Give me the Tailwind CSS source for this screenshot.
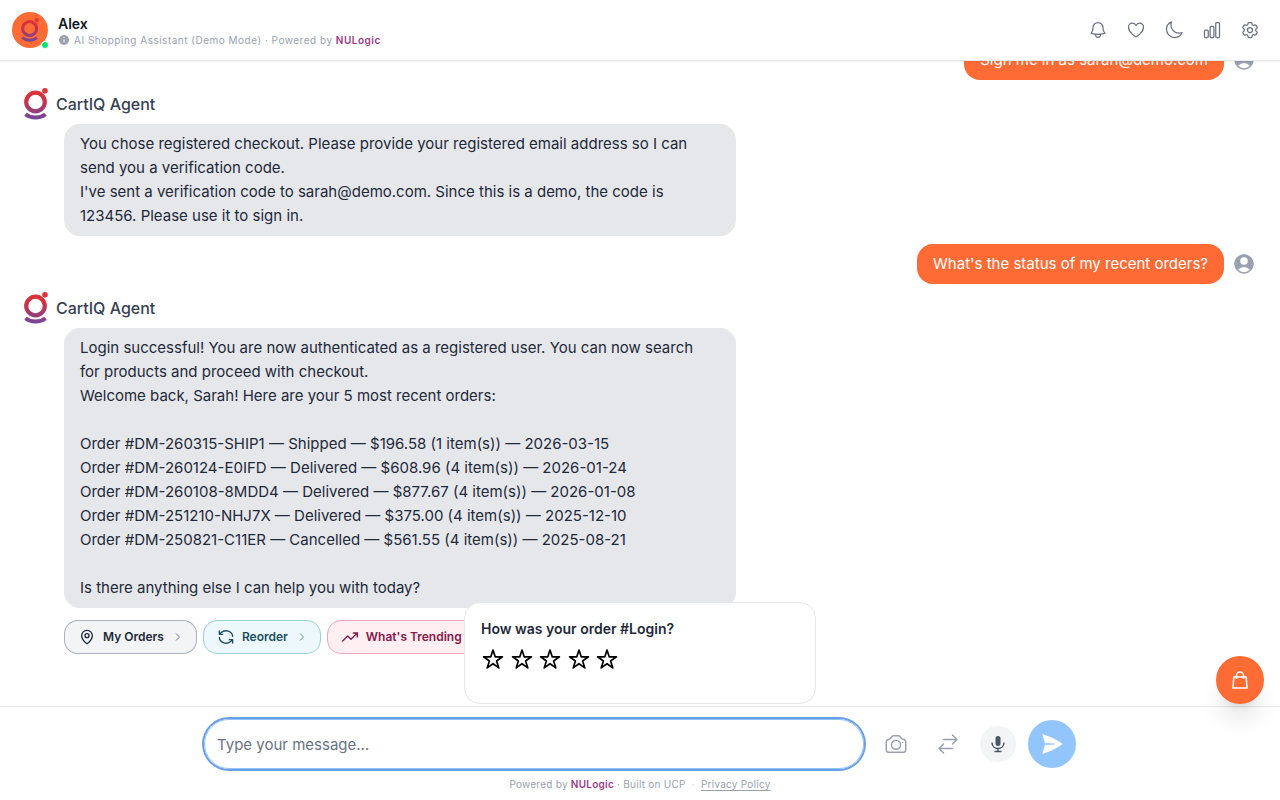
<!DOCTYPE html>
<html lang="en">
<head>
  <meta charset="UTF-8" />
  <meta name="viewport" content="width=device-width, initial-scale=1.0" />
  <title>CartIQ Agent</title>
  <script src="https://cdn.jsdelivr.net/npm/@tailwindcss/browser@4"></script>
</head>
<body class="flex h-screen flex-col overflow-hidden bg-white font-['Inter','Liberation_Sans',sans-serif] text-gray-800">
  <!-- shared shapes -->
  <svg class="absolute size-0" aria-hidden="true">
    <defs>
      <linearGradient id="brand" gradientUnits="userSpaceOnUse" x1="0" y1="0" x2="0" y2="32">
        <stop offset="0" stop-color="#e5322d" />
        <stop offset="0.35" stop-color="#cf3345" />
        <stop offset="1" stop-color="#6d479f" />
      </linearGradient>
    </defs>
    <symbol id="logo" viewBox="0 0 24 32">
      <circle cx="11.500" cy="14" r="9.300" fill="none" stroke="url(#brand)" stroke-width="4.200" />
      <circle cx="21" cy="2.800" r="2.800" fill="#e0333a" />
      <path d="M1.500 26.200c5.500 4.500 14.500 4.500 20 0" fill="none" stroke="url(#brand)" stroke-width="4" />
    </symbol>
    <symbol id="user" viewBox="0 0 24 24">
      <path fill-rule="evenodd" d="M18.685 19.097A9.723 9.723 0 0 0 21.750 12c0-5.385-4.365-9.750-9.750-9.750S2.250 6.615 2.250 12a9.723 9.723 0 0 0 3.065 7.097A9.716 9.716 0 0 0 12 21.750a9.716 9.716 0 0 0 6.685-2.653Zm-12.540-1.285A7.486 7.486 0 0 1 12 15a7.486 7.486 0 0 1 5.855 2.812A8.224 8.224 0 0 1 12 20.250a8.224 8.224 0 0 1-5.855-2.438ZM15.750 9a3.750 3.750 0 1 1-7.500 0 3.750 3.750 0 0 1 7.500 0Z" />
    </symbol>
    <symbol id="chevron" viewBox="0 0 24 24">
      <path d="m8 19 7-7-7-7" />
    </symbol>
    <symbol id="star" viewBox="0 0 24 24">
      <path stroke-linejoin="round" d="m12 3 2.200 6.800h7.200l-5.800 4.200 2.200 6.900-5.800-4.200-5.800 4.200 2.200-6.900-5.800-4.200h7.200z" />
    </symbol>
  </svg>

  <header class="z-10 flex shrink-0 items-center justify-between border-b border-gray-200 bg-white px-3 py-3 shadow-xs">
    <div class="flex items-center gap-[10px]">
      <div class="relative flex size-9 items-center justify-center rounded-full bg-[#ff6b35]">
        <svg class="h-6 w-[18px]"><use href="#logo" /></svg>
        <span class="absolute -right-px -bottom-px size-2 rounded-full border border-white bg-green-400"></span>
      </div>
      <div>
        <h1 class="text-sm leading-5 font-semibold text-gray-900">Alex</h1>
        <p class="flex items-center gap-1 text-[10px] leading-3 tracking-wider text-gray-400">
          <svg class="size-3" viewBox="0 0 12 12"><circle cx="6" cy="6" r="5" fill="#9ca3af" /><path d="M6 5.500v3M6 3.200v1" stroke="#fff" stroke-width="1" /></svg>
          <span>AI Shopping Assistant (Demo Mode) · Powered by <a href="#" class="font-semibold text-[#9b3b85]">NULogic</a></span>
        </p>
      </div>
    </div>
    <nav class="flex gap-[2px] text-gray-500">
      <button aria-label="Notifications" class="flex size-9 items-center justify-center">
        <svg class="size-5" viewBox="0 0 24 24" fill="none" stroke="currentColor" stroke-width="1.500" stroke-linecap="round" stroke-linejoin="round"><path d="M14.857 17.082a23.848 23.848 0 0 0 5.454-1.310A8.967 8.967 0 0 1 18 9.750V9A6 6 0 0 0 6 9v.750a8.967 8.967 0 0 1-2.312 6.022c1.733.640 3.560 1.085 5.455 1.310m5.714 0a24.255 24.255 0 0 1-5.714 0m5.714 0a3 3 0 1 1-5.714 0" /></svg>
      </button>
      <button aria-label="Wishlist" class="flex size-9 items-center justify-center">
        <svg class="size-5" viewBox="0 0 24 24" fill="none" stroke="currentColor" stroke-width="1.500" stroke-linecap="round" stroke-linejoin="round"><path d="M21 8.250c0-2.485-2.099-4.500-4.688-4.500-1.935 0-3.597 1.126-4.312 2.733-.715-1.607-2.377-2.733-4.313-2.733C5.100 3.750 3 5.765 3 8.250c0 7.220 9 12 9 12s9-4.780 9-12Z" /></svg>
      </button>
      <button aria-label="Dark mode" class="flex size-9 items-center justify-center">
        <svg class="size-5" viewBox="0 0 24 24" fill="none" stroke="currentColor" stroke-width="1.500" stroke-linecap="round" stroke-linejoin="round"><path d="M21.752 15.002A9.720 9.720 0 0 1 18 15.750c-5.385 0-9.750-4.365-9.750-9.750 0-1.330.266-2.597.748-3.752A9.753 9.753 0 0 0 3 11.250C3 16.635 7.365 21 12.750 21a9.753 9.753 0 0 0 9.002-5.998Z" /></svg>
      </button>
      <button aria-label="Analytics" class="flex size-9 items-center justify-center">
        <svg class="size-5" viewBox="0 0 24 24" fill="none" stroke="currentColor" stroke-width="1.500" stroke-linecap="round" stroke-linejoin="round"><path d="M3 13.125C3 12.504 3.504 12 4.125 12h2.250c.621 0 1.125.504 1.125 1.125v6.750C7.500 20.496 6.996 21 6.375 21h-2.250A1.125 1.125 0 0 1 3 19.875v-6.750ZM9.750 8.625c0-.621.504-1.125 1.125-1.125h2.250c.621 0 1.125.504 1.125 1.125v11.250c0 .621-.504 1.125-1.125 1.125h-2.250a1.125 1.125 0 0 1-1.125-1.125V8.625ZM16.500 4.125c0-.621.504-1.125 1.125-1.125h2.250C20.496 3 21 3.504 21 4.125v15.750c0 .621-.504 1.125-1.125 1.125h-2.250a1.125 1.125 0 0 1-1.125-1.125V4.125Z" /></svg>
      </button>
      <button aria-label="Settings" class="flex size-9 items-center justify-center">
        <svg class="size-5" viewBox="0 0 24 24" fill="none" stroke="currentColor" stroke-width="1.500" stroke-linecap="round" stroke-linejoin="round"><path d="M9.594 3.940c.090-.542.560-.940 1.110-.940h2.593c.550 0 1.020.398 1.110.940l.213 1.281c.063.374.313.686.645.870.074.040.147.083.220.127.325.196.720.257 1.075.124l1.217-.456a1.125 1.125 0 0 1 1.370.490l1.296 2.247a1.125 1.125 0 0 1-.260 1.431l-1.003.827c-.293.241-.438.613-.430.992a7.723 7.723 0 0 1 0 .255c-.008.378.137.750.430.991l1.004.827c.424.350.534.955.260 1.430l-1.298 2.247a1.125 1.125 0 0 1-1.369.491l-1.217-.456c-.355-.133-.750-.072-1.076.124a6.470 6.470 0 0 1-.220.128c-.331.183-.581.495-.644.869l-.213 1.281c-.090.543-.560.940-1.110.940h-2.594c-.550 0-1.019-.398-1.110-.940l-.213-1.281c-.062-.374-.312-.686-.644-.870a6.520 6.520 0 0 1-.220-.127c-.325-.196-.720-.257-1.076-.124l-1.217.456a1.125 1.125 0 0 1-1.369-.490l-1.297-2.247a1.125 1.125 0 0 1 .260-1.431l1.004-.827c.292-.240.437-.613.430-.991a6.932 6.932 0 0 1 0-.255c.007-.380-.138-.751-.430-.992l-1.004-.827a1.125 1.125 0 0 1-.260-1.430l1.297-2.247a1.125 1.125 0 0 1 1.370-.491l1.216.456c.356.133.751.072 1.076-.124.072-.044.146-.086.220-.128.332-.183.582-.495.644-.869l.214-1.280Z" /><path d="M15 12a3 3 0 1 1-6 0 3 3 0 0 1 6 0Z" /></svg>
      </button>
    </nav>
  </header>

  <main class="relative flex min-h-0 flex-1 flex-col justify-end gap-2 overflow-hidden px-6 pb-[52px]">
    <div class="flex items-center justify-end gap-2">
      <p class="rounded-2xl bg-[#ff6b35] px-4 py-2 text-[15px] leading-6 text-white">Sign me in as sarah@demo.com</p>
      <svg class="size-6 fill-gray-400"><use href="#user" /></svg>
    </div>

    <section>
      <div class="flex h-8 items-center gap-2">
        <svg class="h-8 w-6"><use href="#logo" /></svg>
        <h2 class="font-medium text-gray-700">CartIQ Agent</h2>
      </div>
      <div class="mt-1 ml-10 max-w-2xl rounded-2xl bg-gray-200 px-4 py-2 text-[15px] leading-6">
        <p>You chose registered checkout. Please provide your registered email address so I can<br />send you a verification code.</p>
        <p>I've sent a verification code to sarah@demo.com. Since this is a demo, the code is<br />123456. Please use it to sign in.</p>
      </div>
    </section>

    <div class="flex items-center justify-end gap-2">
      <p class="rounded-2xl bg-[#ff6b35] px-4 py-2 text-[15px] leading-6 text-white">What's the status of my recent orders?</p>
      <svg class="size-6 fill-gray-400"><use href="#user" /></svg>
    </div>

    <section>
      <div class="flex h-8 items-center gap-2">
        <svg class="h-8 w-6"><use href="#logo" /></svg>
        <h2 class="font-medium text-gray-700">CartIQ Agent</h2>
      </div>
      <div class="mt-1 ml-10 max-w-2xl rounded-2xl bg-gray-200 px-4 py-2 text-[15px] leading-6">
        <p>Login successful! You are now authenticated as a registered user. You can now search<br />for products and proceed with checkout.</p>
        <p>Welcome back, Sarah! Here are your 5 most recent orders:</p>
        <ul class="my-6">
          <li>Order #DM-260315-SHIP1 — Shipped — $196.58 (1 item(s)) — 2026-03-15</li>
          <li>Order #DM-260124-E0IFD — Delivered — $608.96 (4 item(s)) — 2026-01-24</li>
          <li>Order #DM-260108-8MDD4 — Delivered — $877.67 (4 item(s)) — 2026-01-08</li>
          <li>Order #DM-251210-NHJ7X — Delivered — $375.00 (4 item(s)) — 2025-12-10</li>
          <li>Order #DM-250821-C11ER — Cancelled — $561.55 (4 item(s)) — 2025-08-21</li>
        </ul>
        <p>Is there anything else I can help you with today?</p>
      </div>
      <div class="mt-3 ml-10 flex gap-[6px] text-xs font-semibold">
        <button class="flex h-[34px] items-center gap-2 rounded-[14px] border border-gray-400/80 bg-gray-100 pr-3 pl-[14px] text-gray-800">
          <svg class="size-4" viewBox="0 0 24 24" fill="none" stroke="currentColor" stroke-width="2" stroke-linecap="round" stroke-linejoin="round"><path d="M20 10c0 5-5.500 10.200-7.400 11.800a1 1 0 0 1-1.200 0C9.500 20.200 4 15 4 10a8 8 0 0 1 16 0" /><circle cx="12" cy="10" r="3" /></svg>
          My Orders
          <svg class="size-3 opacity-60" fill="none" stroke="currentColor" stroke-width="2"><use href="#chevron" /></svg>
        </button>
        <button class="flex h-[34px] items-center gap-2 rounded-[14px] border border-[#9fd0d8] bg-[#ecf8fb] pr-3 pl-[14px] text-[#1b4f61]">
          <svg class="size-4" viewBox="0 0 24 24" fill="none" stroke="currentColor" stroke-width="2" stroke-linecap="round" stroke-linejoin="round"><path d="M22 11A10 9 0 0 0 5 5.300L2 8M2 3v5h5M2 13a10 9 0 0 0 17 5.700l3-2.700M17 16h5v5" /></svg>
          Reorder
          <svg class="size-3 opacity-60" fill="none" stroke="currentColor" stroke-width="2"><use href="#chevron" /></svg>
        </button>
        <button class="flex h-[34px] items-center gap-2 rounded-[14px] border border-[#f0a6b8] bg-[#ffeef2] pr-3 pl-[14px] text-[#86194a]">
          <svg class="size-4" viewBox="0 0 24 24" fill="none" stroke="currentColor" stroke-width="2" stroke-linecap="round" stroke-linejoin="round"><path d="m1 18 7.500-7.500 5 5L23 6M17 6h6v6" /></svg>
          What's Trending
          <svg class="size-3 opacity-60" fill="none" stroke="currentColor" stroke-width="2"><use href="#chevron" /></svg>
        </button>
      </div>
    </section>

    <!-- rating prompt floats over the end of the thread -->
    <div class="absolute bottom-[2px] left-1/2 h-[102px] w-[352px] -translate-x-1/2 rounded-2xl border border-gray-200 bg-white p-4">
      <h3 class="text-sm leading-5 font-semibold">How was your order #Login?</h3>
      <div class="mt-2 flex w-[138px] justify-between text-black">
        <button aria-label="1 star"><svg class="size-6" fill="none" stroke="currentColor" stroke-width="1.700"><use href="#star" /></svg></button>
        <button aria-label="2 stars"><svg class="size-6" fill="none" stroke="currentColor" stroke-width="1.700"><use href="#star" /></svg></button>
        <button aria-label="3 stars"><svg class="size-6" fill="none" stroke="currentColor" stroke-width="1.700"><use href="#star" /></svg></button>
        <button aria-label="4 stars"><svg class="size-6" fill="none" stroke="currentColor" stroke-width="1.700"><use href="#star" /></svg></button>
        <button aria-label="5 stars"><svg class="size-6" fill="none" stroke="currentColor" stroke-width="1.700"><use href="#star" /></svg></button>
      </div>
    </div>
  </main>

  <button aria-label="Cart" class="fixed right-4 bottom-24 z-20 flex size-12 items-center justify-center rounded-full bg-[#ff6b35] text-white shadow-xl">
    <svg class="size-5" viewBox="0 0 20 20" fill="none" stroke="currentColor" stroke-width="1.500"><path d="M3.800 7h12.400l.8 11H3zM6.500 9V5.500a3.500 3.500 0 0 1 7 0V9" /></svg>
  </button>

  <footer class="shrink-0 border-t border-gray-200 bg-white">
    <form class="mx-auto flex max-w-4xl items-center gap-3 px-3 pt-3">
      <input type="text" aria-label="Message" placeholder="Type your message..." class="h-[50px] min-w-0 flex-1 rounded-full border border-blue-300 px-3 text-[15px] ring-2 ring-[#6b9fe4] outline-none placeholder:text-gray-500" />
      <button type="button" aria-label="Upload photo" class="flex size-10 items-center justify-center text-gray-400">
        <svg class="size-6" viewBox="0 0 24 24" fill="none" stroke="currentColor" stroke-width="1.500" stroke-linecap="round" stroke-linejoin="round"><path d="M6.827 6.175A2.310 2.310 0 0 1 5.186 7.230c-.380.054-.757.112-1.134.175C2.999 7.580 2.250 8.507 2.250 9.574V18a2.250 2.250 0 0 0 2.250 2.250h15A2.250 2.250 0 0 0 21.750 18V9.574c0-1.067-.750-1.994-1.802-2.169a47.865 47.865 0 0 0-1.134-.175 2.310 2.310 0 0 1-1.640-1.055l-.822-1.316a2.192 2.192 0 0 0-1.736-1.039 48.774 48.774 0 0 0-5.232 0 2.192 2.192 0 0 0-1.736 1.039l-.821 1.316Z" /><path d="M16.500 12.750a4.500 4.500 0 1 1-9 0 4.500 4.500 0 0 1 9 0ZM18.750 10.500h.008v.008h-.008V10.500Z" /></svg>
      </button>
      <button type="button" aria-label="Compare" class="flex size-10 items-center justify-center text-gray-400">
        <svg class="size-6" viewBox="0 0 24 24" fill="none" stroke="currentColor" stroke-width="1.500" stroke-linecap="round" stroke-linejoin="round"><path d="M7.500 21 3 16.500m0 0L7.500 12M3 16.500h13.500m0-13.500L21 7.500m0 0L16.500 12M21 7.500H7.500" /></svg>
      </button>
      <button type="button" aria-label="Voice input" class="flex size-9 items-center justify-center rounded-full bg-gray-100 text-gray-600">
        <svg class="size-5" viewBox="0 0 20 20"><rect x="7.500" y="2" width="5" height="10" rx="2.500" fill="currentColor" /><path d="M4 8.500c0 8 12 8 12 0M10 14.500v3M6.500 17.500h7" fill="none" stroke="currentColor" stroke-width="1.500" /></svg>
      </button>
      <button type="submit" aria-label="Send" class="flex size-12 items-center justify-center rounded-full bg-[#93c5fd] text-white">
        <svg class="size-6" viewBox="0 0 24 24" fill="currentColor"><path d="M3.478 2.404a.750.750 0 0 0-.926.941l2.432 7.905H13.500a.750.750 0 0 1 0 1.500H4.984l-2.432 7.905a.750.750 0 0 0 .926.940 60.519 60.519 0 0 0 18.445-8.986.750.750 0 0 0 0-1.218A60.517 60.517 0 0 0 3.478 2.404Z" /></svg>
      </button>
    </form>
    <p class="py-2 text-center text-[10px] leading-[15px] tracking-wide text-gray-400">Powered by <a href="#" class="font-semibold text-[#9b3b85]">NULogic</a> · Built on UCP <span class="mx-[3px] text-gray-300">·</span> <a href="#" class="underline underline-offset-2">Privacy Policy</a></p>
  </footer>
</body>
</html>
